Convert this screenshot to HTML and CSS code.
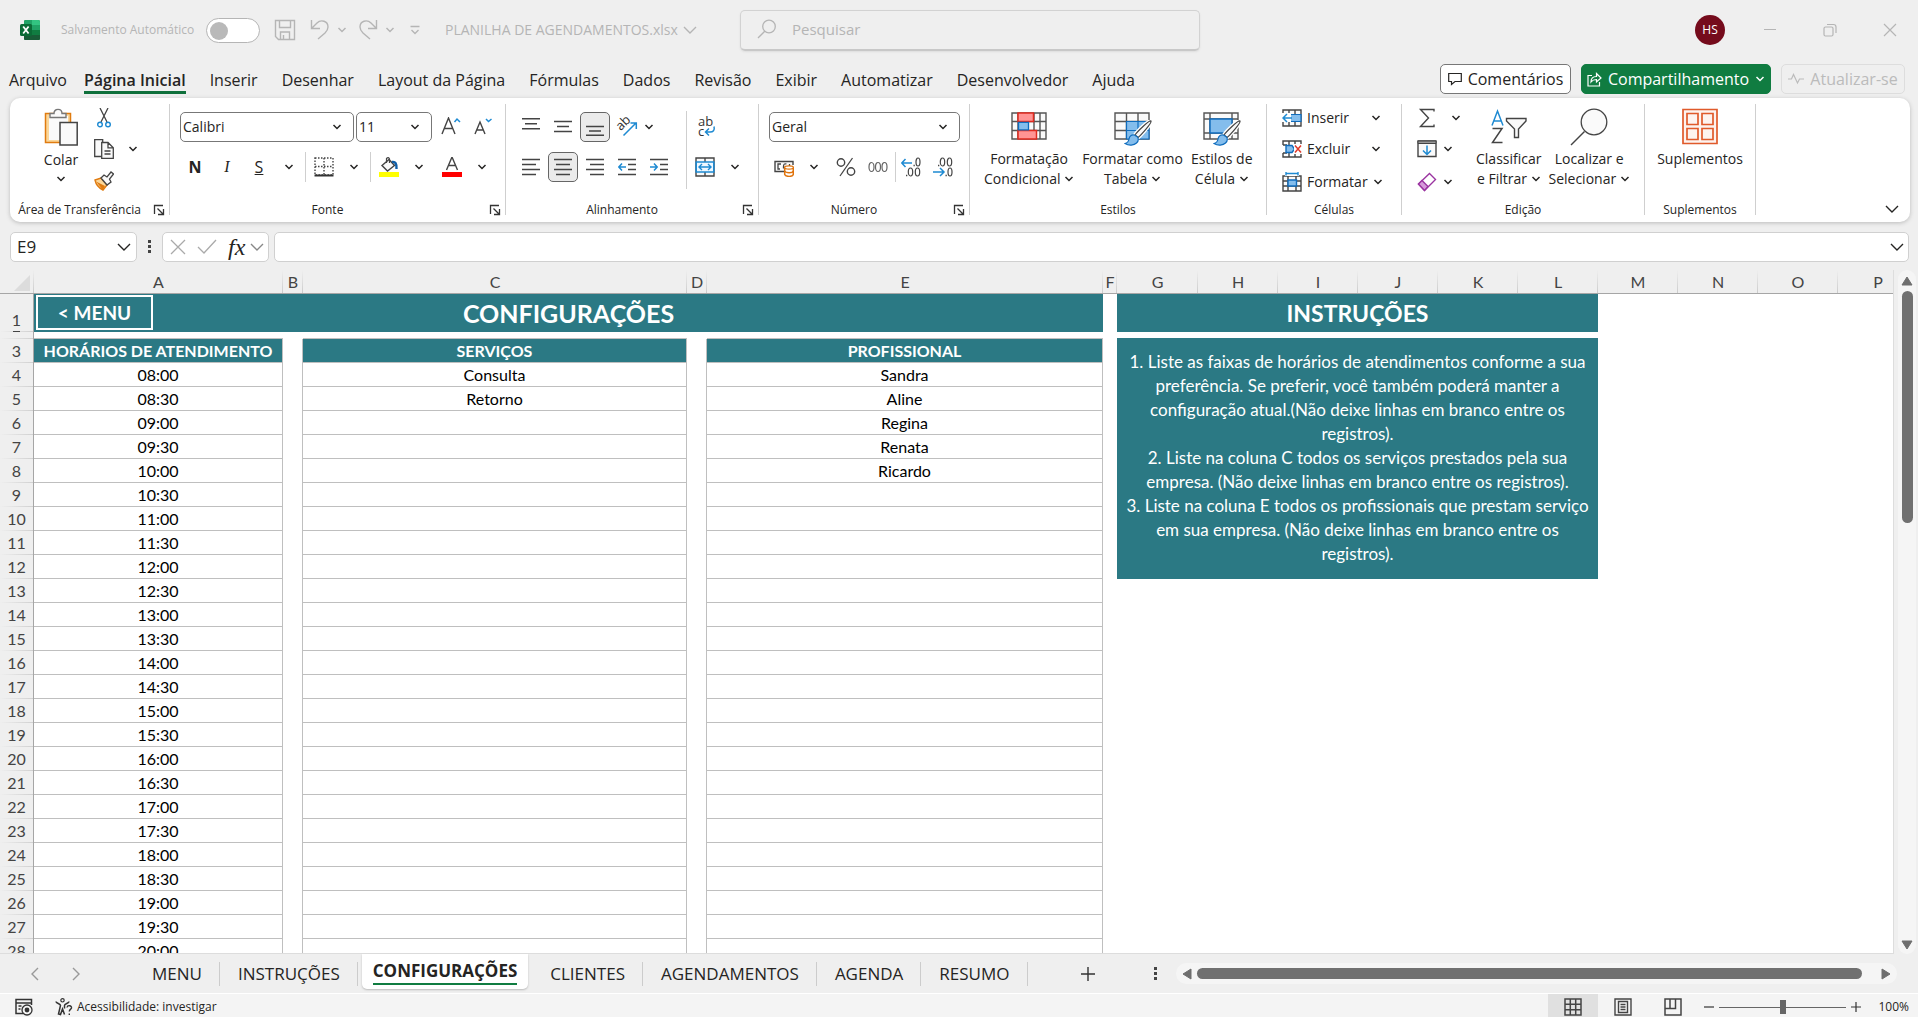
FILE: index.html
```html
<!DOCTYPE html>
<html lang="pt-BR">
<head>
<meta charset="utf-8">
<title>PLANILHA DE AGENDAMENTOS.xlsx</title>
<link rel="stylesheet" href="styles.css">
</head>
<body>
<svg class="sprite" aria-hidden="true">
  <symbol id="chev" viewBox="0 0 10 10"><path d="M1.500 3 5 6.500 8.500 3" fill="none" stroke="currentColor" stroke-width="1.500"/></symbol>
  <symbol id="chev-lg" viewBox="0 0 14 14"><path d="M1 4 7 10l6-6" fill="none" stroke="currentColor" stroke-width="1.400"/></symbol>
  <symbol id="launch" viewBox="0 0 12 12"><path d="M1.500 10V1.500H10M4.500 4.500l5.500 5.500M10.500 5v5.500H5" fill="none" stroke="#333" stroke-width="1.300"/></symbol>
  <symbol id="brush" viewBox="0 0 28 26"><path d="M27 1c-2-1-14 11-16 14l3 2.500C17 15 28 3 27 1Z" fill="#fafafa" stroke="#fff" stroke-width="4"/><path d="M27 1c-2-1-14 11-16 14l3 2.500C17 15 28 3 27 1Z" fill="#fafafa" stroke="#444" stroke-width="1.200"/><path d="M10.500 15c-3-.5-5 1-5.500 4-.5 3-2 4-4 4.500 4 2.500 9 2 11.500-.5 2-2 2-4.500 1-6Z" fill="#84bdec" stroke="#0f6cbd" stroke-width="1.200"/></symbol>
</svg>

<header class="titlebar">
  <div class="title-left">
    <svg class="logo" viewBox="0 0 20 20"><rect x="4" width="16" height="20" rx="1.500" fill="#107c41"/><path d="M4 1.500Q4 0 5.500 0H12v5H4Z" fill="#21a366"/><path d="M12 0h6.500Q20 0 20 1.500V5h-8Z" fill="#33c481"/><path d="M12 5h8v5h-8Z" fill="#21a366"/><path d="M4 15h16v3.500q0 1.500-1.500 1.500h-13Q4 20 4 18.500Z" fill="#185c37"/><rect y="4" width="12" height="12" rx="1.500" fill="#0b6b36"/><path d="m3.200 6.500 5.400 7M8.600 6.500l-5.400 7" stroke="#fff" stroke-width="1.800"/></svg>
    <label class="autosave" for="autosave">Salvamento Automático</label>
    <input class="toggle" type="checkbox" id="autosave">
    <button class="qat save" aria-label="Salvar"><svg width="22" height="22" viewBox="0 0 22 22"><path d="M1.500 1.500h19v19h-16l-3-3ZM5.500 1.500v7h11v-7M6.500 20v-7h9v7M9.500 20v-4" fill="none" stroke="currentColor" stroke-width="1.400"/></svg></button>
    <button class="qat" aria-label="Desfazer"><svg width="20" height="22" viewBox="0 0 20 22"><path d="M1.500 1v8.500H10M1.500 9.500 7 4c4-4 11-2 11 4 0 3-1 4-3 6l-7 6" fill="none" stroke="currentColor" stroke-width="1.400"/></svg><svg class="chev"><use href="#chev"/></svg></button>
    <button class="qat" aria-label="Refazer"><svg width="20" height="22" viewBox="0 0 20 22"><path d="M18.500 1v8.500H10M18.500 9.500 13 4C9 0 2 2 2 8c0 3 1 4 3 6l7 6" fill="none" stroke="currentColor" stroke-width="1.400"/></svg><svg class="chev"><use href="#chev"/></svg></button>
    <button class="qat more" aria-label="Personalizar"><svg width="10" height="10" viewBox="0 0 10 10"><path d="M.5 1.500h9M1.500 5 5 8.500 8.500 5" fill="none" stroke="currentColor" stroke-width="1.300"/></svg></button>
    <button class="filename">PLANILHA DE AGENDAMENTOS.xlsx <svg class="chev-lg"><use href="#chev-lg"/></svg></button>
  </div>
  <div class="search">
    <svg width="20" height="20" viewBox="0 0 20 20"><path d="M1 19 8 12" stroke="currentColor" stroke-width="1.300"/><circle cx="12" cy="7.500" r="6.300" fill="none" stroke="currentColor" stroke-width="1.300"/></svg>
    <input type="search" placeholder="Pesquisar" aria-label="Pesquisar">
  </div>
  <div class="window">
    <button class="avatar">HS</button>
    <button aria-label="Minimizar"><svg width="14" height="14" viewBox="0 0 14 14"><path d="M1 6.500h12" stroke="currentColor"/></svg></button>
    <button aria-label="Restaurar"><svg width="14" height="14" viewBox="0 0 14 14"><rect x="1" y="4" width="9" height="9" rx="1.500" fill="none" stroke="currentColor" stroke-width="1.200"/><path d="M4 1.500h6.500Q13 1.500 13 4v6" fill="none" stroke="currentColor" stroke-width="1.200"/></svg></button>
    <button aria-label="Fechar"><svg width="14" height="14" viewBox="0 0 14 14"><path d="m1 1 12 12M13 1 1 13" stroke="currentColor" stroke-width="1.200"/></svg></button>
  </div>
</header>

<nav class="menubar">
  <div class="menus">
    <a href="#">Arquivo</a><a href="#" class="current">Página Inicial</a><a href="#">Inserir</a><a href="#">Desenhar</a><a href="#">Layout da Página</a><a href="#">Fórmulas</a><a href="#">Dados</a><a href="#">Revisão</a><a href="#">Exibir</a><a href="#">Automatizar</a><a href="#">Desenvolvedor</a><a href="#">Ajuda</a>
  </div>
  <div class="actions">
    <button class="comments"><svg width="14" height="14" viewBox="0 0 14 14"><path d="M.7 1.500h12.600v8H7L3.500 12.500v-3H.7Z" fill="none" stroke="currentColor" stroke-width="1.200"/></svg>Comentários</button>
    <button class="share"><svg width="15" height="15" viewBox="0 0 15 15"><path d="M5 3.500H1v10.500h11.500v-4M4 10c0-4 2-5.500 5.500-5.500V1.500L14 6 9.500 10V7.500C7 7.500 5.500 8 4 10Z" fill="none" stroke="currentColor" stroke-width="1.200"/></svg>Compartilhamento<svg class="chev"><use href="#chev"/></svg></button>
    <button class="update" disabled><svg width="16" height="14" viewBox="0 0 16 14"><path d="M0 7h3.500l2-4.500 4 8.500 2-4H16" fill="none" stroke="currentColor" stroke-width="1.200"/></svg>Atualizar-se</button>
  </div>
</nav>

<section class="ribbon">
  <div class="group g-clip">
    <div class="tools">
      <button class="big paste"><svg width="34" height="38" viewBox="0 0 34 38"><path d="M1.500 5.500h25v29h-25Z" fill="#fbd79a" stroke="#e07b10" stroke-width="1.500"/><path d="M5 8h19v24H5Z" fill="#fafafa"/><path d="M6 9.500V5.500h4C10 0 18 0 18 5.500h4v4Z" fill="#fafafa" stroke="#777" stroke-width="1.400"/><path d="M16 14.500h17.200v22.500H16Z" fill="#fafafa" stroke="#444" stroke-width="1.500"/></svg><span>Colar</span><svg class="chev"><use href="#chev"/></svg></button>
      <div class="col trio">
        <button class="tool" aria-label="Recortar"><svg width="14" height="20" viewBox="0 0 14 20"><path d="m3 0 7 14M11 0 4 14" stroke="#444" stroke-width="1.300"/><circle cx="3" cy="16.500" r="2.300" fill="none" stroke="#1e8ad2" stroke-width="1.400"/><circle cx="11" cy="16.500" r="2.300" fill="none" stroke="#1e8ad2" stroke-width="1.400"/></svg></button>
        <div class="row"><button class="tool" aria-label="Copiar"><svg width="20" height="20" viewBox="0 0 20 20"><path d="M7.500 17.500H.7V.7h8V4" fill="#fafafa" stroke="#444" stroke-width="1.300"/><path d="M7.700 3.500H14l5.300 5.300v10.500H7.700ZM14 3.500v5.300h5.300M10.500 12h6M10.500 15h6" fill="#fafafa" stroke="#444" stroke-width="1.300"/></svg></button><button class="drop" aria-label="Opções de cópia"><svg class="chev"><use href="#chev"/></svg></button></div>
        <button class="tool" aria-label="Pincel de formatação"><svg width="20" height="20" viewBox="0 0 20 20"><path d="M1 9 7 7l6 7-4 5C5 17 2 14 1 9Z" fill="#fbd79a" stroke="#e07b10" stroke-width="1.400"/><path d="M2 10.500l9 4.500-2 4Z" fill="#e07b10"/><path d="m7 7 3-3 3 2 4-5 2.500 2-4 5 1.500 3-4 3Z" fill="#fafafa" stroke="#444" stroke-width="1.300"/></svg></button>
      </div>
    </div>
    <div class="caption"><span>Área de Transferência</span><button aria-label="Mais opções"><svg><use href="#launch"/></svg></button></div>
  </div>

  <div class="group g-font">
    <div class="tools stack">
      <div class="row">
        <div class="combo font-name"><select aria-label="Fonte"><option>Calibri</option></select><svg class="chev"><use href="#chev"/></svg></div>
        <div class="combo font-size"><select aria-label="Tamanho"><option>11</option></select><svg class="chev"><use href="#chev"/></svg></div>
        <button class="tool" aria-label="Aumentar fonte"><svg width="20" height="20" viewBox="0 0 20 20"><path d="M1 17 7.500 1 14 17M3.500 11.500h8" fill="none" stroke="#444" stroke-width="1.400"/><path d="m13.500 5 2.500-3 3 3" fill="none" stroke="#1e8ad2" stroke-width="1.500"/></svg></button>
        <button class="tool" aria-label="Diminuir fonte"><svg width="20" height="20" viewBox="0 0 20 20"><path d="m2 17 5-12 5 12M4 13h6.500" fill="none" stroke="#444" stroke-width="1.400"/><path d="m13 2 2.500 2.500L18.500 2" fill="none" stroke="#1e8ad2" stroke-width="1.500"/></svg></button>
      </div>
      <div class="row">
        <button class="tool letter"><b>N</b></button><button class="tool letter"><i>I</i></button><button class="tool letter"><u>S</u></button><button class="drop wide" aria-label="Sublinhado"><svg class="chev"><use href="#chev"/></svg></button>
        <span class="rule"></span>
        <button class="tool" aria-label="Bordas"><svg width="20" height="20" viewBox="0 0 20 20"><path d="M1 1h18v17H1ZM10 1v17M1 9.500h18" fill="none" stroke="#444" stroke-width="1.400" stroke-dasharray="1.500 1.500"/><path d="M.500 18.500h19" stroke="#333" stroke-width="2"/></svg></button><button class="drop wide" aria-label="Opções de borda"><svg class="chev"><use href="#chev"/></svg></button>
        <span class="rule"></span>
        <button class="tool" aria-label="Cor de preenchimento"><svg width="20" height="20" viewBox="0 0 20 20"><path d="m3 8.500 7-6 5.500 6-7 5.500Z" fill="#fafafa" stroke="#444" stroke-width="1.400"/><path d="M7.500 6V1.500Q9.500-.5 10.500 2v4" fill="none" stroke="#444" stroke-width="1.200"/><path d="M13 5q5-1 4.500 7" fill="none" stroke="#0f5ea8" stroke-width="2.400"/><path d="M0 15h20v5H0Z" fill="#ff0"/></svg></button><button class="drop wide" aria-label="Opções de preenchimento"><svg class="chev"><use href="#chev"/></svg></button>
        <button class="tool font-color" aria-label="Cor da fonte"><svg width="20" height="20" viewBox="0 0 20 20"><path d="m4.500 13 5.500-13 5.500 13M6.500 8.500h7" fill="none" stroke="#444" stroke-width="1.400"/><path d="M0 15h20v5H0Z" fill="red"/></svg></button><button class="drop wide" aria-label="Opções de cor"><svg class="chev"><use href="#chev"/></svg></button>
      </div>
    </div>
    <div class="caption"><span>Fonte</span><button aria-label="Mais opções"><svg><use href="#launch"/></svg></button></div>
  </div>

  <div class="group g-align">
    <div class="tools">
      <div class="col stack">
        <div class="row">
          <button class="tool" aria-label="Alinhar em cima"><svg width="18" height="18" viewBox="0 0 18 18"><path d="M0 .700h18M3 5.700h12M0 10.700h18" stroke="#444" stroke-width="1.400"/></svg></button>
          <button class="tool" aria-label="Alinhar no meio"><svg width="18" height="18" viewBox="0 0 18 18"><path d="M0 3.500h18M3 8.500h12M0 13.500h18" stroke="#444" stroke-width="1.400"/></svg></button>
          <button class="tool on" aria-label="Alinhar embaixo"><svg width="18" height="18" viewBox="0 0 18 18"><path d="M0 8.500h18M3 13h12M0 17.300h18" stroke="#444" stroke-width="1.400"/></svg></button>
          <button class="tool" aria-label="Orientação"><svg class="glyph" width="20" height="20" viewBox="0 0 20 20"><text transform="translate(9 9) rotate(-45)" text-anchor="middle" font-size="13">ab</text><path d="M6.500 18.500 19 6M13.500 6h5.800v6" fill="none" stroke="#1e8ad2" stroke-width="1.500"/></svg></button>
          <button class="drop" aria-label="Opções de orientação"><svg class="chev"><use href="#chev"/></svg></button>
        </div>
        <div class="row">
          <button class="tool" aria-label="Alinhar à esquerda"><svg width="18" height="18" viewBox="0 0 18 18"><path d="M0 1.500h18M0 6.500h14M0 11.500h18M0 16.500h14" stroke="#444" stroke-width="1.400"/></svg></button>
          <button class="tool on" aria-label="Centralizar"><svg width="18" height="18" viewBox="0 0 18 18"><path d="M0 1.500h18M2 6.500h14M0 11.500h18M2 16.500h14" stroke="#444" stroke-width="1.400"/></svg></button>
          <button class="tool" aria-label="Alinhar à direita"><svg width="18" height="18" viewBox="0 0 18 18"><path d="M0 1.500h18M4 6.500h14M0 11.500h18M4 16.500h14" stroke="#444" stroke-width="1.400"/></svg></button>
          <button class="tool" aria-label="Diminuir recuo"><svg width="18" height="18" viewBox="0 0 18 18"><path d="M0 1.500h18M10 6.500h8M10 11.500h8M0 16.500h18" stroke="#444" stroke-width="1.400"/><path d="M8 9H1M4 5.500.800 9 4 12.500" fill="none" stroke="#1e8ad2" stroke-width="1.500"/></svg></button>
          <button class="tool" aria-label="Aumentar recuo"><svg width="18" height="18" viewBox="0 0 18 18"><path d="M0 1.500h18M10 6.500h8M10 11.500h8M0 16.500h18" stroke="#444" stroke-width="1.400"/><path d="M0 9h7M4 5.500 7.200 9 4 12.500" fill="none" stroke="#1e8ad2" stroke-width="1.500"/></svg></button>
        </div>
      </div>
      <div class="col stack merge">
        <button class="tool" aria-label="Quebrar texto"><svg class="glyph" width="20" height="20" viewBox="0 0 20 20"><text x="3" y="9" font-size="13">ab</text><text x="3" y="19" font-size="13">c</text><path d="M19 9.500c1 4-1 5.500-4 5.500h-4M14 11.500 10.500 15l3.500 3.500" fill="none" stroke="#1e8ad2" stroke-width="1.500"/></svg></button>
        <div class="row"><button class="tool" aria-label="Mesclar e centralizar"><svg width="20" height="20" viewBox="0 0 20 20"><path d="M1 1h18v18H1ZM10 1v18" fill="#fafafa" stroke="#444" stroke-width="1.400"/><path d="M1.200 5h17.600v10H1.200Z" fill="#f0f8ff" stroke="#1e8ad2" stroke-width="1.600"/><path d="M4 10h12M7 7l-3 3 3 3M13 7l3 3-3 3" fill="none" stroke="#1e8ad2" stroke-width="1.400"/></svg></button><button class="drop wide" aria-label="Opções de mesclagem"><svg class="chev"><use href="#chev"/></svg></button></div>
      </div>
    </div>
    <div class="caption"><span>Alinhamento</span><button aria-label="Mais opções"><svg><use href="#launch"/></svg></button></div>
  </div>

  <div class="group g-number">
    <div class="tools stack">
      <div class="row"><div class="combo format"><select aria-label="Formato de número"><option>Geral</option></select><svg class="chev"><use href="#chev"/></svg></div></div>
      <div class="row">
        <button class="tool" aria-label="Moeda"><svg width="20" height="20" viewBox="0 0 20 20"><path d="M10 14.500H1V4.500h18V8" fill="#fafafa" stroke="#444" stroke-width="1.400"/><path d="M7 7H4v5h2M12.500 7q-3-1-3 2.500v2M15.500 7v2" fill="none" stroke="#444" stroke-width="1.300"/><path d="M10.700 10.500v7c1 2.500 8 2.500 8.600 0v-7Z" fill="#fff" stroke="#e0730c" stroke-width="1.500"/><ellipse cx="15" cy="10.500" rx="4.300" ry="1.600" fill="#fff" stroke="#e0730c" stroke-width="1.300"/><path d="M10.700 14c1 2.300 8 2.300 8.600 0" fill="none" stroke="#e0730c" stroke-width="1.300"/></svg></button><button class="drop wide" aria-label="Opções de moeda"><svg class="chev"><use href="#chev"/></svg></button>
        <button class="tool percent" aria-label="Porcentagem"><svg width="20" height="20" viewBox="0 0 20 20"><path d="M16.500 1 4 19" stroke="#444" stroke-width="1.300"/><circle cx="5" cy="5.500" r="3.700" fill="none" stroke="#444" stroke-width="1.400"/><circle cx="15" cy="14.500" r="3.700" fill="none" stroke="#444" stroke-width="1.400"/></svg></button>
        <button class="tool" aria-label="Milhares"><svg width="20" height="12" viewBox="0 0 20 12"><g fill="none" stroke="#666" stroke-width="1.200"><ellipse cx="3.500" cy="6" rx="2.500" ry="4.500"/><ellipse cx="10" cy="6" rx="2.500" ry="4.500"/><ellipse cx="16.500" cy="6" rx="2.500" ry="4.500"/></g></svg></button>
        <span class="rule"></span>
        <button class="tool" aria-label="Aumentar casas decimais"><svg width="20" height="20" viewBox="0 0 20 20"><g fill="none" stroke="#444" stroke-width="1.200"><ellipse cx="17" cy="5" rx="2" ry="4"/><ellipse cx="9.500" cy="15" rx="2.200" ry="4"/><ellipse cx="16.500" cy="15" rx="2.200" ry="4"/></g><path d="M5 18.500h1.300M12.500 8.500h1.300" stroke="#444" stroke-width="1.400"/><path d="M11 6H1M4.500 2 .800 6l3.700 4" fill="none" stroke="#1e8ad2" stroke-width="1.500"/></svg></button>
        <button class="tool" aria-label="Diminuir casas decimais"><svg width="20" height="20" viewBox="0 0 20 20"><g fill="none" stroke="#444" stroke-width="1.200"><ellipse cx="9.500" cy="5" rx="2.200" ry="4"/><ellipse cx="16.500" cy="5" rx="2.200" ry="4"/><ellipse cx="17" cy="15" rx="2" ry="4"/></g><path d="M5 8.500h1.300M12.500 18.500h1.300" stroke="#444" stroke-width="1.400"/><path d="M0 15h10.500M7 11l4 4-4 4" fill="none" stroke="#1e8ad2" stroke-width="1.500"/></svg></button>
      </div>
    </div>
    <div class="caption"><span>Número</span><button aria-label="Mais opções"><svg><use href="#launch"/></svg></button></div>
  </div>

  <div class="group g-styles">
    <div class="tools">
      <button class="big"><svg width="36" height="38" viewBox="0 0 36 38"><path d="M1 5h34v26H1ZM7 5v26M29 5v26M23 5v26M1 13.500h34M1 22.500h34" fill="#fafafa" stroke="#555" stroke-width="1.400"/><path d="M7 5h15.500v8.500H7ZM7 22.500h18.500V31H7Z" fill="#ff9494" stroke="#e02a1f" stroke-width="1.500"/><path d="M7.500 14.300h10v7.500h-10Z" fill="#84bdec" stroke="#0f6cbd" stroke-width="1.300"/></svg><span>Formatação<br>Condicional <svg class="chev"><use href="#chev"/></svg></span></button>
      <button class="big"><svg width="38" height="38" viewBox="0 0 38 38"><path d="M1 5h34v26H1ZM12.500 5v26M24 5v26M1 13.500h34M1 22.500h34" fill="#fafafa" stroke="#555" stroke-width="1.400"/><path d="M12.500 13.500H35V31H12.500Z" fill="#84bdec"/><path d="M12.500 13.500H35V31H12.500ZM24 13.500V31M12.500 22.500H35" fill="none" stroke="#0f6cbd" stroke-width="1.200"/><use href="#brush" x="10" y="12" width="28" height="26"/></svg><span>Formatar como<br>Tabela <svg class="chev"><use href="#chev"/></svg></span></button>
      <button class="big"><svg width="38" height="38" viewBox="0 0 38 38"><path d="M1 5h34v26H1ZM7 5v26M29 5v26M1 11h34M1 25h34" fill="#fafafa" stroke="#555" stroke-width="1.400"/><path d="M7 11h22v14H7Z" fill="#84bdec" stroke="#0f6cbd" stroke-width="1.400"/><use href="#brush" x="10" y="12" width="28" height="26"/></svg><span>Estilos de<br>Célula <svg class="chev"><use href="#chev"/></svg></span></button>
    </div>
    <div class="caption"><span>Estilos</span></div>
  </div>

  <div class="group g-cells">
    <div class="tools">
      <div class="col trio">
        <button class="wide-tool"><svg width="20" height="20" viewBox="0 0 20 20"><path d="M1 2h18v16H1ZM7 2v16M13 2v16M1 7h18M1 13h18" fill="#fafafa" stroke="#444" stroke-width="1.400"/><path d="M8 6.500h11v7H8Z" fill="#84bdec" stroke="#0f6cbd" stroke-width="1.200"/><path d="M0 5h9v9H0Z" fill="#fff"/><path d="M10 10H1M5 6l-4 4 4 4" fill="none" stroke="#1e8ad2" stroke-width="1.500"/></svg>Inserir<svg class="chev"><use href="#chev"/></svg></button>
        <button class="wide-tool"><svg width="20" height="20" viewBox="0 0 20 20"><path d="M1 6V2h18v4M1 14v4h18v-4M7 2v4M13 2v4M7 14v4M13 14v4M1 6h4M1 14h4" fill="none" stroke="#444" stroke-width="1.400"/><path d="M4 6.500h6l2.500 3.500-2.500 3.500H4Z" fill="#84bdec" stroke="#0f6cbd" stroke-width="1.400"/><path d="M12 5h8v10h-8Z" fill="#fff"/><path d="m13 6.500 6 7M19 6.500l-6 7" stroke="#e03a2a" stroke-width="1.500"/></svg>Excluir<svg class="chev"><use href="#chev"/></svg></button>
        <button class="wide-tool"><svg width="20" height="20" viewBox="0 0 20 20"><path d="M1 4h18v15H1ZM6 4v15M14 4v15M1 9h18M1 14h18" fill="#fafafa" stroke="#444" stroke-width="1.400"/><path d="M6 8h8.500v6H6Z" fill="#84bdec" stroke="#0f6cbd" stroke-width="1.400"/><path d="M3 2h14v2H3Z" fill="#fff"/><path d="M4 1.500h12M4 0v3.500M16 0v3.500" stroke="#1e8ad2" stroke-width="1.400"/></svg>Formatar<svg class="chev"><use href="#chev"/></svg></button>
      </div>
    </div>
    <div class="caption"><span>Células</span></div>
  </div>

  <div class="group g-edit">
    <div class="tools">
      <div class="col trio">
        <button class="split sum" aria-label="AutoSoma"><svg width="20" height="20" viewBox="0 0 20 20"><path d="M17 3.500V1.500H3.500L11.500 10 3.500 18.500H17v-2" fill="none" stroke="#444" stroke-width="1.400"/></svg><svg class="chev"><use href="#chev"/></svg></button>
        <button class="split" aria-label="Preencher"><svg width="20" height="20" viewBox="0 0 20 20"><path d="M1 2h18v15.500H1Z" fill="#fafafa" stroke="#444" stroke-width="1.400"/><path d="M1 2h18v2.500H1Z" fill="#999" stroke="#444"/><path d="M10 6.500v9M6 11.500l4 4 4-4" fill="none" stroke="#1e8ad2" stroke-width="1.500"/></svg><svg class="chev"><use href="#chev"/></svg></button>
        <button class="split" aria-label="Limpar"><svg width="20" height="20" viewBox="0 0 20 20"><path d="M12.500 1.500 18.500 7.500 7.500 18.500 1.500 12Z" fill="#fff" stroke="#9a33a0" stroke-width="1.400"/><path d="m5 8.500 6 6-3.500 4-6-6.500Z" fill="#d59bd9" stroke="#9a33a0" stroke-width="1.400"/></svg><svg class="chev"><use href="#chev"/></svg></button>
      </div>
      <button class="big"><svg width="36" height="38" viewBox="0 0 36 38"><path d="M1 17.500 6.500 3 12 17.500M3 13h7" fill="none" stroke="#1e8ad2" stroke-width="1.500"/><path d="M1.500 20.500H11L1.500 34.500H11.500" fill="none" stroke="#444" stroke-width="1.500"/><path d="M15.500 10.500h19.500v2.500l-7.500 8v8.500h-4V21l-8-8Z" fill="#fafafa" stroke="#444" stroke-width="1.400"/></svg><span>Classificar<br>e Filtrar <svg class="chev"><use href="#chev"/></svg></span></button>
      <button class="big find"><svg width="38" height="38" viewBox="0 0 38 38"><circle cx="24" cy="14" r="12.800" fill="#fafafa" stroke="#444" stroke-width="1.300"/><path d="M1 37 14.500 23.500" stroke="#444" stroke-width="1.400"/></svg><span>Localizar e<br>Selecionar <svg class="chev"><use href="#chev"/></svg></span></button>
    </div>
    <div class="caption"><span>Edição</span></div>
  </div>

  <div class="group g-addins">
    <div class="tools">
      <button class="big"><svg width="36" height="38" viewBox="0 0 36 38"><path d="M1 1.500h34v34H1ZM5 5.500h11v11H5ZM20 5.500h11v11H20ZM5 20.500h11v11H5ZM20 20.500h11v11H20Z" fill="#fdf3ef" stroke="#e05a2b" stroke-width="1.700"/></svg><span>Suplementos</span></button>
    </div>
    <div class="caption"><span>Suplementos</span></div>
  </div>
  <button class="collapse" aria-label="Recolher faixa"><svg class="chev-lg"><use href="#chev-lg"/></svg></button>
</section>

<div class="formulabar">
  <div class="namebox"><input type="text" value="E9" aria-label="Caixa de nome"><svg class="chev-lg"><use href="#chev-lg"/></svg></div>
  <svg class="dots" width="4" height="14" viewBox="0 0 4 14"><path d="M0 0h3v3H0ZM0 5h3v3H0ZM0 10h3v3H0Z" fill="#444"/></svg>
  <div class="fx">
    <button aria-label="Cancelar"><svg width="16" height="16" viewBox="0 0 16 16"><path d="m1 1 14 14M15 1 1 15" stroke="#aaa" stroke-width="1.300"/></svg></button>
    <button aria-label="Inserir"><svg width="20" height="16" viewBox="0 0 20 16"><path d="m1 8 6 6L19 1" fill="none" stroke="#aaa" stroke-width="1.300"/></svg></button>
    <button class="fn"><i>fx</i></button>
    <svg class="chev-lg"><use href="#chev-lg"/></svg>
  </div>
  <div class="formula"><input type="text" aria-label="Barra de fórmulas"><svg class="chev-lg"><use href="#chev-lg"/></svg></div>
</div>

<main class="workarea">
  <div class="sheet">
    <table>
      <colgroup><col class="w-head"><col class="w-a"><col class="w-gap"><col class="w-c"><col class="w-gap"><col class="w-e"><col class="w-f"><col class="w-g"><col class="w-std"><col class="w-std"><col class="w-std"><col class="w-std"><col class="w-std"><col class="w-std"><col class="w-std"><col class="w-std"><col class="w-std"></colgroup>
      <thead><tr><th class="corner"><svg width="16" height="16" viewBox="0 0 16 16"><path d="M16 0v16H0Z" fill="#dcdcdc"/></svg></th><th>A</th><th>B</th><th>C</th><th>D</th><th>E</th><th>F</th><th>G</th><th>H</th><th>I</th><th>J</th><th>K</th><th>L</th><th>M</th><th>N</th><th>O</th><th>P</th></tr></thead>
      <tbody>
        <tr class="r-title"><th>1</th><td colspan="5" class="band main-title"><a class="menu-link" href="#">&lt; MENU</a>CONFIGURAÇÕES</td><td></td><td colspan="6" class="band">INSTRUÇÕES</td><td colspan="4"></td></tr>
        <tr class="r-thin"><th aria-label="2"><span></span></th><td class="line"></td><td></td><td class="line"></td><td></td><td class="line"></td><td colspan="11"></td></tr>
        <tr class="r-head"><th>3</th><td class="cell">HORÁRIOS DE ATENDIMENTO</td><td class="gap"></td><td class="cell">SERVIÇOS</td><td class="gap"></td><td class="cell">PROFISSIONAL</td><td></td><td colspan="6" rowspan="10" class="notes">1. Liste as faixas de horários de atendimentos conforme a sua<br>preferência. Se preferir, você também poderá manter a<br>configuração atual.(Não deixe linhas em branco entre os<br>registros).<br>2. Liste na coluna C todos os serviços prestados pela sua<br>empresa. (Não deixe linhas em branco entre os registros).<br>3. Liste na coluna E todos os profissionais que prestam serviço<br>em sua empresa. (Não deixe linhas em branco entre os<br>registros).</td></tr>
        <tr><th>4</th><td class="cell">08:00</td><td class="gap"></td><td class="cell">Consulta</td><td class="gap"></td><td class="cell">Sandra</td></tr>
        <tr><th>5</th><td class="cell">08:30</td><td class="gap"></td><td class="cell">Retorno</td><td class="gap"></td><td class="cell">Aline</td></tr>
        <tr><th>6</th><td class="cell">09:00</td><td class="gap"></td><td class="cell"></td><td class="gap"></td><td class="cell">Regina</td></tr>
        <tr><th>7</th><td class="cell">09:30</td><td class="gap"></td><td class="cell"></td><td class="gap"></td><td class="cell">Renata</td></tr>
        <tr><th>8</th><td class="cell">10:00</td><td class="gap"></td><td class="cell"></td><td class="gap"></td><td class="cell">Ricardo</td></tr>
        <tr><th>9</th><td class="cell">10:30</td><td class="gap"></td><td class="cell"></td><td class="gap"></td><td class="cell"></td></tr>
        <tr><th>10</th><td class="cell">11:00</td><td class="gap"></td><td class="cell"></td><td class="gap"></td><td class="cell"></td></tr>
        <tr><th>11</th><td class="cell">11:30</td><td class="gap"></td><td class="cell"></td><td class="gap"></td><td class="cell"></td></tr>
        <tr><th>12</th><td class="cell">12:00</td><td class="gap"></td><td class="cell"></td><td class="gap"></td><td class="cell"></td></tr>
        <tr><th>13</th><td class="cell">12:30</td><td class="gap"></td><td class="cell"></td><td class="gap"></td><td class="cell"></td></tr>
        <tr><th>14</th><td class="cell">13:00</td><td class="gap"></td><td class="cell"></td><td class="gap"></td><td class="cell"></td></tr>
        <tr><th>15</th><td class="cell">13:30</td><td class="gap"></td><td class="cell"></td><td class="gap"></td><td class="cell"></td></tr>
        <tr><th>16</th><td class="cell">14:00</td><td class="gap"></td><td class="cell"></td><td class="gap"></td><td class="cell"></td></tr>
        <tr><th>17</th><td class="cell">14:30</td><td class="gap"></td><td class="cell"></td><td class="gap"></td><td class="cell"></td></tr>
        <tr><th>18</th><td class="cell">15:00</td><td class="gap"></td><td class="cell"></td><td class="gap"></td><td class="cell"></td></tr>
        <tr><th>19</th><td class="cell">15:30</td><td class="gap"></td><td class="cell"></td><td class="gap"></td><td class="cell"></td></tr>
        <tr><th>20</th><td class="cell">16:00</td><td class="gap"></td><td class="cell"></td><td class="gap"></td><td class="cell"></td></tr>
        <tr><th>21</th><td class="cell">16:30</td><td class="gap"></td><td class="cell"></td><td class="gap"></td><td class="cell"></td></tr>
        <tr><th>22</th><td class="cell">17:00</td><td class="gap"></td><td class="cell"></td><td class="gap"></td><td class="cell"></td></tr>
        <tr><th>23</th><td class="cell">17:30</td><td class="gap"></td><td class="cell"></td><td class="gap"></td><td class="cell"></td></tr>
        <tr><th>24</th><td class="cell">18:00</td><td class="gap"></td><td class="cell"></td><td class="gap"></td><td class="cell"></td></tr>
        <tr><th>25</th><td class="cell">18:30</td><td class="gap"></td><td class="cell"></td><td class="gap"></td><td class="cell"></td></tr>
        <tr><th>26</th><td class="cell">19:00</td><td class="gap"></td><td class="cell"></td><td class="gap"></td><td class="cell"></td></tr>
        <tr><th>27</th><td class="cell">19:30</td><td class="gap"></td><td class="cell"></td><td class="gap"></td><td class="cell"></td></tr>
        <tr><th>28</th><td class="cell">20:00</td><td class="gap"></td><td class="cell"></td><td class="gap"></td><td class="cell"></td></tr>
      </tbody>
    </table>
  </div>
  <div class="vscroll">
    <svg width="12" height="10" viewBox="0 0 12 10"><path d="M6 1 11 9H1Z" fill="#6e6e6e" stroke="#6e6e6e" stroke-linejoin="round"/></svg>
    <span class="vtrack"><span class="vthumb"></span></span>
    <svg width="12" height="10" viewBox="0 0 12 10"><path d="M6 9 11 1H1Z" fill="#6e6e6e" stroke="#6e6e6e" stroke-linejoin="round"/></svg>
  </div>
</main>

<div class="sheetbar">
  <div class="arrows"><button aria-label="Planilha anterior"><svg width="8" height="14" viewBox="0 0 8 14"><path d="M7 1 1 7l6 6" fill="none" stroke="currentColor" stroke-width="1.400"/></svg></button><button aria-label="Próxima planilha"><svg width="8" height="14" viewBox="0 0 8 14"><path d="m1 1 6 6-6 6" fill="none" stroke="currentColor" stroke-width="1.400"/></svg></button></div>
  <div class="tabs"><button>MENU</button><button>INSTRUÇÕES</button><button class="active"><span>CONFIGURAÇÕES</span></button><button>CLIENTES</button><button>AGENDAMENTOS</button><button>AGENDA</button><button>RESUMO</button></div>
  <button class="add" aria-label="Nova planilha"><svg width="16" height="16" viewBox="0 0 16 16"><path d="M1 8h14M8 1v14" stroke="#333" stroke-width="1.400"/></svg></button>
  <svg class="dots" width="4" height="14" viewBox="0 0 4 14"><path d="M0 0h3v3H0ZM0 5h3v3H0ZM0 10h3v3H0Z" fill="#444"/></svg>
  <div class="hscroll">
    <svg width="10" height="12" viewBox="0 0 10 12"><path d="M1 6 9 1v10Z" fill="#6e6e6e" stroke="#6e6e6e" stroke-linejoin="round"/></svg>
    <span class="htrack"><span class="hthumb"></span></span>
    <svg width="10" height="12" viewBox="0 0 10 12"><path d="M9 6 1 1v10Z" fill="#6e6e6e" stroke="#6e6e6e" stroke-linejoin="round"/></svg>
  </div>
</div>

<footer class="status">
  <button class="macro" aria-label="Gravar macro"><svg width="18" height="18" viewBox="0 0 18 18"><path d="M8 15.500H1V1.500h15.500V7M1 5h15.500M3.500 8h3M3.500 11h2" fill="none" stroke="#333" stroke-width="1.500"/><circle cx="12" cy="12" r="5" fill="#f5f5f5" stroke="#333" stroke-width="1.300"/><circle cx="12" cy="12" r="2.400" fill="#333"/></svg></button>
  <button class="access"><svg width="18" height="18" viewBox="0 0 18 18"><circle cx="7.500" cy="2.300" r="1.700" fill="none" stroke="#333" stroke-width="1.200"/><path d="M1 3.500c0 2 4.500 2 4.500 4L3.500 16l2 .500 2-5.500 2 5.500M14 3.500c0 2-4.500 2-4.500 4v3" fill="none" stroke="#333" stroke-width="1.500"/><path d="M12 9.500c.5-3 5-2 4.500.5-.5 1.500-2.200 1.500-2.200 3.500M14.300 15.500v1.500" fill="none" stroke="#333" stroke-width="1.400"/></svg>Acessibilidade: investigar</button>
  <div class="views">
    <button class="active" aria-label="Normal"><svg width="18" height="18" viewBox="0 0 18 18"><path d="M1 1h16v16H1ZM6.300 1v16M11.700 1v16M1 6.300h16M1 11.700h16" fill="none" stroke="#444" stroke-width="1.500"/></svg></button>
    <button aria-label="Layout da página"><svg width="18" height="18" viewBox="0 0 18 18"><path d="M1 1h16v16H1ZM4.500 3.500h9v11h-9ZM6.500 6.500h5M6.500 9h5M6.500 11.500h5" fill="none" stroke="#444" stroke-width="1.400"/></svg></button>
    <button aria-label="Quebra de página"><svg width="18" height="18" viewBox="0 0 18 18"><path d="M1 1h16v16H1ZM1 10.500h10.500V1M6 1v9.500" fill="none" stroke="#444" stroke-width="1.500"/></svg></button>
  </div>
  <div class="zoom">
    <button aria-label="Reduzir"><svg width="12" height="12" viewBox="0 0 12 12"><path d="M1 6h10" stroke="#333" stroke-width="1.200"/></svg></button>
    <input type="range" min="0" max="100" value="50" aria-label="Zoom">
    <button aria-label="Ampliar"><svg width="12" height="12" viewBox="0 0 12 12"><path d="M1 6h10M6 1v10" stroke="#333" stroke-width="1.200"/></svg></button>
    <span>100%</span>
  </div>
</footer>
</body>
</html>
```
FILE: styles.css
```css
* { box-sizing: border-box; }

body {
  margin: 0;
  height: 100vh;
  display: flex;
  flex-direction: column;
  overflow: hidden;
  background: #efefef;
  color: #252423;
  font: 14px/20px "Open Sans", "Noto Sans", sans-serif;
}

button, input, select { font: inherit; color: inherit; }
button { display: inline-flex; align-items: center; justify-content: center; padding: 0; border: 0; background: none; white-space: nowrap; }
input { border: 0; outline: 0; background: none; min-width: 0; padding: 0; }
a { color: inherit; text-decoration: none; }
svg { flex: none; }
.sprite { position: absolute; width: 0; height: 0; }
.chev { width: 10px; height: 10px; }
.chev-lg { width: 14px; height: 14px; }
.glyph { overflow: visible; fill: #333; }

/* Title bar */
.titlebar { display: flex; flex: none; height: 60px; padding-right: 8px; color: #b5b5b5; }
.title-left { display: flex; align-items: center; width: 740px; padding-left: 20px; }
.logo { width: 20px; height: 20px; margin-right: 21px; }
.autosave { width: 145px; font-size: 12px; white-space: nowrap; }
.toggle { appearance: none; width: 54px; height: 25px; margin: 0 14px 0 0; padding: 3px; border: 1px solid #b5b5b5; border-radius: 13px; background: #fff; }
.toggle::before { content: ""; display: block; width: 18px; height: 18px; border-radius: 9px; background: #b9b9b9; }
.qat { justify-content: flex-start; width: 48px; gap: 7px; }
.qat.save { width: 22px; margin-right: 14px; }
.qat.more { width: 10px; margin: 0 25px 0 4px; }
.filename { gap: 5px; font-size: 14px; }
.search { display: flex; align-items: center; flex: 0 1 460px; height: 41px; margin-top: 10px; padding: 0 16px 2px; gap: 15px; border: 1px solid #d2d2d2; border-bottom: 2px solid #c8c8c8; border-radius: 5px; box-shadow: 0 1px 2px #ddd; font-size: 15px; }
.search input { flex: 1; }
.search input::placeholder { color: #b5b5b5; }
.window { display: flex; align-items: center; margin-left: auto; gap: 20px; }
.window button { width: 40px; }
.window .avatar { width: 30px; height: 30px; margin-right: 5px; border-radius: 15px; background: #750b1c; color: #fff; font-size: 12px; }

/* Menu bar */
.menubar { display: flex; flex: none; height: 38px; padding: 0 13px 0 9px; justify-content: space-between; font-size: 16px; }
.menus { display: flex; align-items: center; gap: 24px; }
.menus a { height: 30px; padding-top: 6px; white-space: nowrap; }
.menus .current { margin-left: -7px; font-weight: 600; box-shadow: inset 0 -3px #0f703b; }
.actions { display: flex; gap: 10px; padding-top: 4px; }
.actions button { height: 30px; border: 1px solid #777; border-radius: 5px; gap: 6px; background: #fff; }
.actions .comments { width: 131px; }
.actions .share { width: 190px; border-color: #107c41; background: #107c41; color: #fff; }
.actions .update { width: 124px; border-color: #ddd; background: #efefef; color: #bbb; }

/* Ribbon */
.ribbon { display: flex; flex: none; height: 124px; margin: 0 8px 0 10px; padding: 6px 0; border-radius: 10px; background: #fff; box-shadow: 0 1px 4px #bbb; }
.group { display: flex; flex-direction: column; flex: none; border-right: 1px solid #cfcfcf; height: 111px; }
.tools { display: flex; flex: 1; }
.caption { display: flex; height: 20px; line-height: 20px; font-size: 12px; align-items: center; margin-bottom: -5px; }
.caption span { flex: 1; text-align: center; white-space: nowrap; }
.caption button { width: 20px; }
.caption svg { width: 12px; height: 12px; }
.g-clip { width: 160px; }
.g-font { width: 336px; }
.g-align { width: 253px; }
.g-number { width: 211px; }
.g-styles { width: 297px; }
.g-cells { width: 135px; }
.g-edit { width: 243px; }
.g-addins { width: 111px; }
.row { display: flex; align-items: center; height: 30px; }
.col { display: flex; flex-direction: column; }
.stack { display: flex; flex-direction: column; gap: 10px; padding-top: 8px; }
.trio { gap: 1px; }
.trio > * { height: 32px; }
.trio > :first-child { height: 28px; }
.tool { width: 30px; height: 30px; margin-right: 2px; }
.tool.on { border: 1px solid #666; border-radius: 5px; background: #ebebeb; }
.drop { width: 16px; height: 30px; }
.drop.wide { width: 26px; }
.rule { width: 1px; height: 30px; margin: 0 3px; background: #cfcfcf; }
.combo { position: relative; height: 30px; border: 1px solid #777; border-radius: 5px; }
.combo select { appearance: none; width: 100%; height: 28px; padding: 0 2px; border: 0; background: none; }
.combo .chev { position: absolute; right: 11px; top: 9px; }
.font-name { width: 174px; margin-right: 2px; }
.font-size { width: 76px; margin-right: 4px; }
.font-color { margin-left: 5px; }
.format { width: 191px; }
.letter { font-size: 16px; }
.letter i { font-family: "Liberation Serif", serif; }
.g-font .stack { padding-left: 10px; }
.g-align .stack { padding-left: 10px; }
.g-align .drop { width: 10px; }
.g-align .merge { margin-left: 10px; padding-left: 4px; position: relative; }
.g-align .drop.wide { width: 26px; }
.g-align .merge::before { content: ""; position: absolute; left: 0; top: 7px; width: 1px; height: 78px; background: #cfcfcf; }
.g-number .stack { padding-left: 10px; }
.g-number .rule { margin: 0; }
.percent { margin-left: 4px; }
.big { flex-direction: column; justify-content: flex-start; align-self: flex-start; padding-top: 4px; text-align: center; gap: 3px; }
.big span { display: block; line-height: 20px; }
.g-clip .tools { padding-left: 7px; }
.paste { width: 72px; padding-left: 16px; gap: 4px; }
.g-clip .drop { margin-left: 4px; }
.g-clip .row { height: 32px; }
.g-styles .tools { padding-left: 14px; gap: 8px; }
.g-cells .tools { padding-left: 15px; }
.wide-tool { width: 105px; gap: 5px; justify-content: flex-start; }
.wide-tool .chev { margin-left: auto; margin-right: 6px; }
.g-edit .tools { padding-left: 15px; }
.split { width: 48px; gap: 6px; justify-content: flex-start; }
.split.sum { gap: 14px; }
.g-edit .big { margin-left: 11px; }
.g-edit .big.find { margin-left: 7px; }
.g-addins .tools { justify-content: center; }
.collapse { align-self: flex-end; margin-left: auto; margin-right: 11px; }

/* Formula bar */
.formulabar { display: flex; flex: none; align-items: center; height: 30px; margin: 10px 9px 0 10px; }
.namebox, .fx, .formula { display: flex; align-items: center; height: 30px; border: 1px solid #d0d0d0; border-radius: 5px; background: #fff; }
.namebox { width: 127px; padding: 0 5px 0 6px; font-size: 17px; }
.namebox input { flex: 1; }
.formulabar .dots { margin: 0 10px 0 11px; }
.fx { width: 107px; padding: 0 2px 0 7px; gap: 11px; }
.fx .chev-lg { margin-left: -6px; color: #888; }
.fn { font: 24px/28px "Liberation Serif", serif; }
.formula { flex: 1; margin-left: 5px; padding: 0 4px; }
.formula input { flex: 1; }

/* Worksheet */
.workarea { display: flex; flex: 1; min-height: 0; padding-top: 8px; }
.sheet { flex: 1; min-width: 0; overflow: hidden; border-right: 1px solid #ddd; border-bottom: 1px solid #ddd; background: #fff; font-family: Lato, sans-serif; font-size: 16px; color: #000; }
table { table-layout: fixed; width: 1918px; border-collapse: separate; border-spacing: 0; }
.w-head { width: 34px; }
.w-a { width: 249px; }
.w-gap { width: 20px; }
.w-c { width: 384px; }
.w-e { width: 396px; }
.w-f { width: 14px; }
.w-g { width: 81px; }
.w-std { width: 80px; }
th, td { height: 24px; padding: 0; text-align: center; line-height: 22px; white-space: nowrap; }
th { background: linear-gradient(90deg, #efefef, #d0d0d0) bottom / 100% 1px no-repeat #efefef; border-right: 1px solid #a6a6a6; color: #444; font-weight: 400; }
thead th { border-right: 0; border-bottom: 1px solid #a6a6a6; background: linear-gradient(#efefef, #ccc) right / 1px 100% no-repeat #efefef; }
.corner svg { display: block; margin: 2px 0 0 14px; }
.cell { border-right: 1px solid #bfbfbf; border-bottom: 1px solid #bfbfbf; }
.gap { border-right: 1px solid #bfbfbf; }
.line { border-bottom: 1px solid #bfbfbf; }
.r-title th { height: 38px; vertical-align: bottom; line-height: 24px; }
.band { position: relative; background: #2b7984; color: #fff; font-size: 23px; font-weight: 700; line-height: 36px; }
.main-title { font-size: 25px; }
.menu-link { position: absolute; left: 2px; top: 1px; width: 117px; height: 35px; border: 2px solid #fff; font-size: 19px; line-height: 31px; }
.r-thin th, .r-thin td { height: 7px; line-height: 0; }
.r-thin th span { display: block; width: 7px; height: 1px; margin: -5px auto 0; background: #444; }
.r-head .cell { background: #2b7984; color: #fff; font-weight: 700; }
.notes { padding-top: 11px; vertical-align: top; background: #2b7984; box-shadow: 0 -1px #2b7984; color: #fff; font-size: 17px; line-height: 24px; }
.vscroll { display: flex; flex-direction: column; align-items: center; width: 18px; margin: 0 2px 0 4px; padding: 6px 0 4px; border-radius: 9px; background: #f5f5f5; }
.vtrack { flex: 1; padding: 5px 0; }
.vthumb { display: block; width: 11px; height: 36%; border-radius: 6px; background: #707070; }

/* Sheet tabs */
.sheetbar { display: flex; flex: none; align-items: center; height: 39px; }
.arrows { display: flex; width: 134px; padding-left: 31px; gap: 33px; color: #999; }
.tabs { display: flex; height: 39px; align-items: flex-start; font-size: 17px; }
.tabs button { position: relative; height: 39px; padding: 0 18px; }
.tabs button::after { content: ""; position: absolute; right: 0; top: 8px; width: 1px; height: 24px; background: #ccc; }
.tabs .active { height: 35px; margin: 0 4px; padding: 0 11px; border-radius: 0 0 5px 5px; background: #fff; box-shadow: 0 1px 2px #bbb; font-weight: 700; }
.tabs .active::after { display: none; }
.tabs .active span { border-bottom: 2px solid #107c41; line-height: 24px; }
.add { margin-left: 52px; }
.sheetbar .dots { margin-left: 58px; }
.hscroll { display: flex; flex: 1; align-items: center; height: 21px; margin: 0 21px 0 18px; padding: 0 6px; gap: 5px; border-radius: 11px; background: #f5f5f5; }
.htrack { flex: 1; }
.hthumb { display: block; width: 98%; height: 11px; border-radius: 6px; background: #707070; }

/* Status bar */
.status { display: flex; flex: none; align-items: center; height: 24px; border-top: 1px solid #fff; background: #f4f4f4; font-size: 12px; }
.macro, .access, .views button, .zoom { padding-top: 3px; }
.macro { margin-left: 15px; }
.access { margin-left: 22px; gap: 4px; }
.views { display: flex; margin-left: auto; }
.views button { width: 50px; height: 23px; }
.views .active { background: #e0e0e0; }
.zoom { display: flex; align-items: center; margin: 0 9px 0 5px; }
.zoom input { appearance: none; width: 127px; height: 14px; margin: 0 4px; background: linear-gradient(#666, #666) center / 100% 1px no-repeat; }
.zoom input::-webkit-slider-thumb { appearance: none; width: 6px; height: 14px; background: #666; }
.zoom span { margin-left: 16px; }
```
